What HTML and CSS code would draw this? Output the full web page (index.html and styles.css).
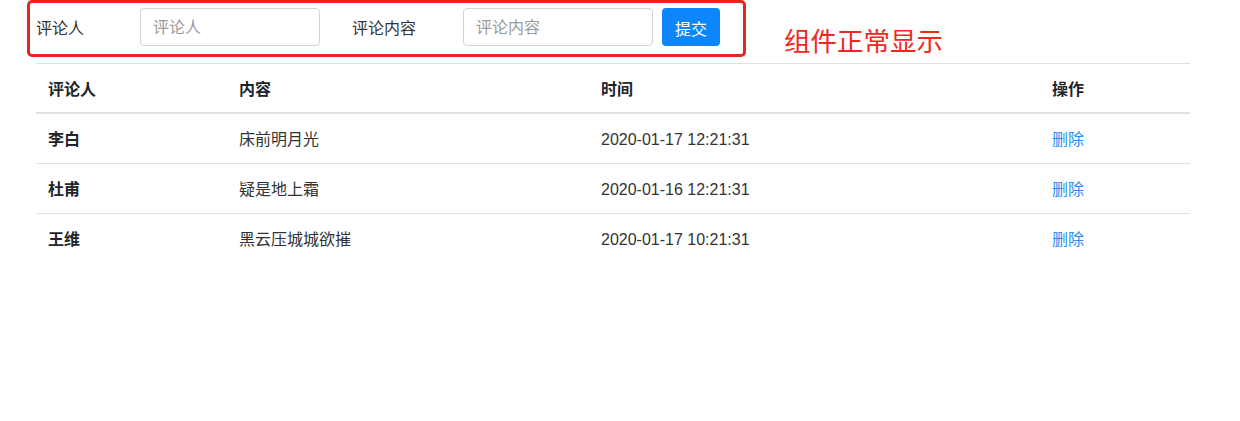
FILE: index.html
```html
<!DOCTYPE html>
<html lang="zh-CN">
<head>
<meta charset="utf-8">
<title>评论</title>
<link rel="stylesheet" href="styles.css">
</head>
<body>
<div class="page">
  <div class="top">
    <form class="comment-form">
      <label class="label label-name">评论人</label>
      <input class="field field-name" type="text" placeholder="评论人">
      <label class="label label-content">评论内容</label>
      <input class="field field-content" type="text" placeholder="评论内容">
      <button class="btn" type="button">提交</button>
    </form>
    <div class="note">组件正常显示</div>
    <div class="red-box"></div>
  </div>
  <table class="table">
    <thead>
      <tr>
        <th class="c1">评论人</th>
        <th class="c2">内容</th>
        <th class="c3">时间</th>
        <th class="c4">操作</th>
      </tr>
    </thead>
    <tbody>
      <tr>
        <td class="name">李白</td>
        <td>床前明月光</td>
        <td>2020-01-17 12:21:31</td>
        <td><a class="del" href="#">删除</a></td>
      </tr>
      <tr>
        <td class="name">杜甫</td>
        <td>疑是地上霜</td>
        <td>2020-01-16 12:21:31</td>
        <td><a class="del" href="#">删除</a></td>
      </tr>
      <tr>
        <td class="name">王维</td>
        <td>黑云压城城欲摧</td>
        <td>2020-01-17 10:21:31</td>
        <td><a class="del" href="#">删除</a></td>
      </tr>
    </tbody>
  </table>
</div>
</body>
</html>
```

FILE: styles.css
```css
* { box-sizing: border-box; }

html, body {
  margin: 0;
  padding: 0;
  background: #fff;
}

body {
  font-family: "Liberation Sans", "Noto Sans CJK SC", sans-serif;
  font-size: 16px;
  line-height: 1.5;
  color: #212529;
}

.page {
  padding: 8px 50px 0 36px;
}

.top {
  position: relative;
  display: flex;
  align-items: flex-start;
  height: 38px;
}

.comment-form {
  display: flex;
  align-items: center;
  height: 38px;
}

.label {
  color: #333;
  font-size: 16px;
  padding-top: 4px;
}

.label-name { width: 104px; }
.label-content { width: 111px; margin-left: 32px; }

.field {
  height: 38px;
  border: 1px solid #ced4da;
  border-radius: 4px;
  padding: 2px 12px 0;
  font-family: inherit;
  font-size: 16px;
  color: #495057;
  background: #fff;
  outline: none;
}

.field::placeholder { color: #9a9a9a; }

.field-name { width: 180px; }
.field-content { width: 190px; }

.btn {
  margin-left: 9px;
  width: 58px;
  height: 38px;
  border: none;
  border-radius: 4px;
  background: #0d86fc;
  color: #fff;
  font-family: inherit;
  font-size: 16px;
  padding: 2px 0 0;
}

.note {
  margin-left: 64px;
  margin-top: 19px;
  font-size: 26.5px;
  line-height: 30px;
  color: #f0281e;
}

.red-box {
  position: absolute;
  left: -9px;
  top: -8px;
  width: 719px;
  height: 57px;
  border: 3px solid #e8251d;
  border-radius: 5px;
  pointer-events: none;
}

.table {
  margin-top: 17px;
  width: 1154px;
  border-collapse: collapse;
}

.table th,
.table td {
  text-align: left;
  padding: 14px 12px 10px;
  border-top: 1px solid #dee2e6;
  vertical-align: top;
}

.table td { padding-bottom: 11px; }

.table th {
  font-weight: bold;
  color: #212529;
  border-bottom: 2px solid #dee2e6;
}

.table td { color: #333; }

.table td.name { font-weight: bold; color: #212529; }

.c1 { width: 191px; }
.c2 { width: 362px; }
.c3 { width: 451px; }
.c4 { width: 150px; }

.del {
  color: #2a8cf0;
  text-decoration: none;
}
```
